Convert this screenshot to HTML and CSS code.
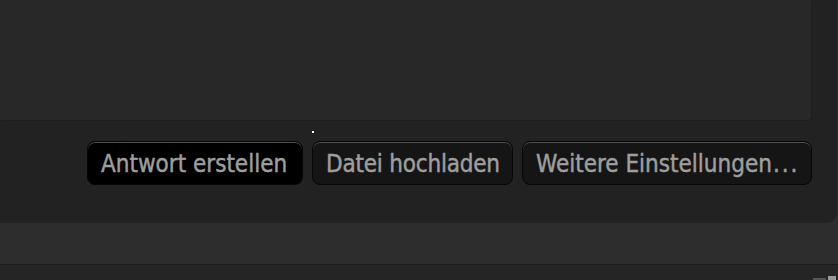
FILE: index.html
```html
<!DOCTYPE html>
<html lang="de">
<head>
<meta charset="utf-8">
<title>Antwort</title>
<link rel="stylesheet" href="styles.css">
</head>
<body>
<div class="page">
  <div class="editor-box">
    <div class="textarea"></div>
    <div class="actions">
      <span class="dot"></span>
      <button class="btn btn-primary btn-reply">Antwort erstellen</button>
      <button class="btn btn-upload">Datei hochladen</button>
      <button class="btn btn-more">Weitere Einstellungen<span class="ellipsis">...</span></button>
    </div>
  </div>
  <div class="band"></div>
  <div class="footer-box">
    <span class="mini-icon"><span class="mi-a"></span><span class="mi-b"></span></span>
  </div>
</div>
</body>
</html>
```
FILE: styles.css
```css
html, body {
  margin: 0;
  padding: 0;
  background: #2d2d2d;
  overflow: hidden;
}
.page {
  width: 838px;
  height: 280px;
  display: flex;
  flex-direction: column;
}
.editor-box {
  width: 837px;
  height: 223px;
  box-sizing: border-box;
  background: #222222;
  border-bottom-right-radius: 10px;
  padding-right: 26px;
}
.textarea {
  height: 120px;
  background: #282828;
  border-bottom-right-radius: 4px;
  box-shadow: 1px 1px 0 #1e1e1e;
}
.actions {
  position: relative;
  margin-top: 21px;
  margin-right: -1px;
  display: flex;
  justify-content: flex-end;
  gap: 9px;
}
.dot {
  position: absolute;
  left: 312px;
  top: -10px;
  width: 2px;
  height: 2px;
  background: #ffffff;
}
.btn {
  height: 44px;
  box-sizing: border-box;
  margin: 0;
  padding: 2px 0 0 13px;
  border: 1px solid #060606;
  border-radius: 8px;
  background: #151515;
  box-shadow: inset 0 1px 0 #505050;
  color: #9e9e9e;
  -webkit-text-stroke: 0.45px #9e9e9e;
  font-family: "DejaVu Sans Condensed", "DejaVu Sans", sans-serif;
  font-stretch: condensed;
  font-size: 24px;
  line-height: 1;
  white-space: nowrap;
  display: flex;
  align-items: center;
  overflow: hidden;
}
.btn-primary {
  background: #000000;
}
.btn-reply { width: 216px; }
.btn-upload { width: 201px; letter-spacing: -0.2px; }
.btn-more { width: 290px; }
.ellipsis { letter-spacing: 2px; margin-left: 1px; }
.band {
  height: 41px;
  background: #2d2d2d;
}
.footer-box {
  flex: 1;
  width: 836px;
  background: #252525;
  border-top: 1px solid #1c1c1c;
  border-top-right-radius: 6px;
  display: flex;
  justify-content: flex-end;
  align-items: flex-end;
  padding-right: 12px;
}
.mini-icon {
  display: flex;
  align-items: flex-end;
  gap: 2px;
}
.mi-a {
  width: 13px;
  height: 2px;
  background: #555555;
}
.mi-b {
  width: 8px;
  height: 4px;
  background: #9a9a9a;
}
```
